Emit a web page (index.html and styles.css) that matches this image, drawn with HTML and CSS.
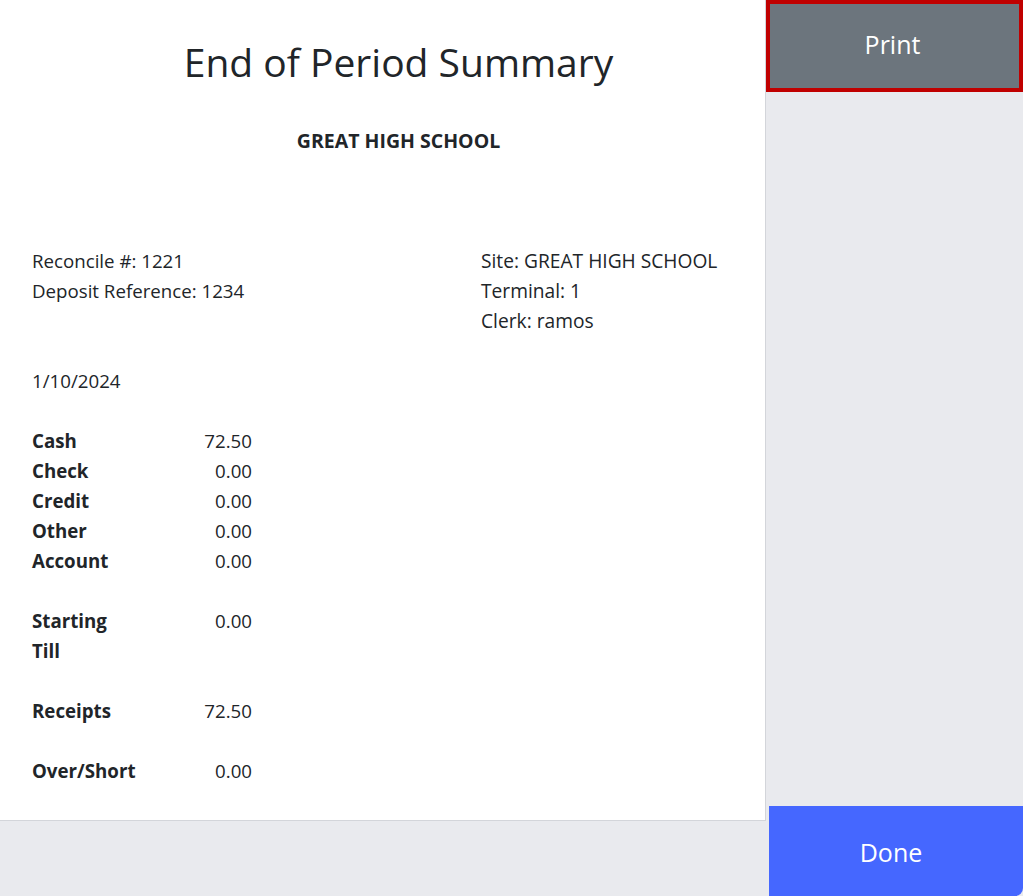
FILE: index.html
```html
<!DOCTYPE html>
<html lang="en">
<head>
    <meta charset="UTF-8">
    <meta name="viewport" content="width=device-width, initial-scale=1.0">
    <title>End of Period Summary</title>
    <link rel="stylesheet" href="styles.css">
</head>
<body>
    <div class="main">
        <div class="report">
            <h1>End of Period Summary</h1>
            <div class="school">GREAT HIGH SCHOOL</div>

            <div class="info">
                <div>
                    Reconcile #: 1221<br>
                    Deposit Reference: 1234
                </div>
                <div>
                    Site: GREAT HIGH SCHOOL<br>
                    Terminal: 1<br>
                    Clerk: ramos
                </div>
            </div>

            <div class="date">1/10/2024</div>

            <table class="totals">
                <tr><th>Cash</th><td>72.50</td></tr>
                <tr><th>Check</th><td>0.00</td></tr>
                <tr><th>Credit</th><td>0.00</td></tr>
                <tr><th>Other</th><td>0.00</td></tr>
                <tr><th>Account</th><td>0.00</td></tr>
                <tr class="spacer"><td colspan="2"></td></tr>
                <tr><th>Starting Till</th><td>0.00</td></tr>
                <tr class="spacer"><td colspan="2"></td></tr>
                <tr><th>Receipts</th><td>72.50</td></tr>
                <tr class="spacer"><td colspan="2"></td></tr>
                <tr><th>Over/Short</th><td>0.00</td></tr>
            </table>
        </div>
    </div>

    <div class="sidebar">
        <button class="btn btn-print">Print</button>
        <button class="btn btn-done">Done</button>
    </div>
</body>
</html>
```

FILE: styles.css
```css
/* General styling */
body, html {
    margin: 0;
    padding: 0;
    height: 100%;
}

body {
    display: flex;
    font-family: "Open Sans", "Noto Sans", Arial, sans-serif;
    color: #212529;
    background-color: #e9eaee;
    overflow: hidden;
}

/* Left side - the printed summary */
.main {
    width: 766px;
    flex-shrink: 0;
}

.report {
    background-color: #fff;
    border-right: 1px solid #d3d5da;
    border-bottom: 1px solid #d3d5da;
    height: 821px;
    box-sizing: border-box;
    padding: 38px 0 0 32px;
    font-size: 18.7px;
    line-height: 30px;
}

h1 {
    margin: 0;
    font-size: 39px;
    line-height: 48px;
    font-weight: 500;
    text-align: center;
}

.school {
    margin-top: 41px;
    font-size: 19.5px;
    line-height: 28px;
    font-weight: bold;
    text-align: center;
}

.info {
    display: grid;
    grid-template-columns: 449px 1fr;
    margin-top: 91px;
}

.info div + div {
    font-size: 19.2px;
}

.date {
    margin-top: 30px;
}

.totals {
    margin-top: 30px;
    border-collapse: collapse;
    width: 220px;
}

.totals th,
.totals td {
    padding: 0;
    vertical-align: top;
}

.totals th {
    width: 106px;
    max-width: 106px;
    text-align: left;
    font-weight: bold;
}

.totals td {
    text-align: right;
}

.totals .spacer td {
    height: 30px;
}

/* Right side - buttons */
.sidebar {
    flex: 1;
    display: flex;
    flex-direction: column;
    justify-content: space-between;
}

.btn {
    font-family: inherit;
    font-size: 25px;
    color: #fff;
    border: none;
    cursor: pointer;
}

.btn-print {
    height: 92px;
    padding: 0 10px 4px 6px;
    background-color: #6c757d;
    border: 4px solid #c00000;
}

.btn-done {
    height: 90px;
    margin-left: 3px;
    padding: 2px 10px 0 0;
    background-color: #4567ff;
    border-bottom-right-radius: 8px;
}
```
